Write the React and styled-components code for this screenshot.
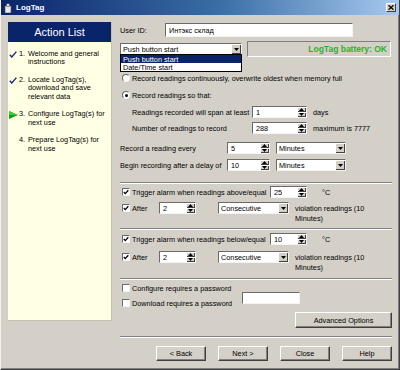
import React from "react";
import styled, { createGlobalStyle } from "styled-components";

const GlobalStyle = createGlobalStyle`
  html, body { margin:0; padding:0; background:#d4d0c8; }
  body {
    font-family: "Liberation Sans", Arial, sans-serif;
    font-size:7.3px;
    color:#000;
  }
  * { box-sizing:border-box; }
`;

const Window = styled.div`
  width:400px;
  height:370px;
  background:#d4d0c8;
  border-left:1px solid #f4f3ef;
  border-right:1px solid #404040;
  border-bottom:1px solid #404040;
  box-shadow:inset -1px -1px 0 #808080;
  display:flex;
  flex-direction:column;
  overflow:hidden;
`;

const TitleBar = styled.div`
  height:15px;
  flex:none;
  display:flex;
  align-items:center;
  padding:0 3px 0 3px;
  background:linear-gradient(90deg, #0a246a 0%, #3a6ea5 55%, #a6caf0 100%);
`;

const TitleText = styled.span`
  margin-left:4px;
  color:#fff;
  font-weight:bold;
  font-size:8px;
  flex:1;
`;

const CloseBox = styled.div`
  width:10px;
  height:9px;
  background:#d4d0c8;
  border:1px solid;
  border-color:#fff #404040 #404040 #fff;
  display:flex;
  align-items:center;
  justify-content:center;
`;

const Body = styled.div`
  display:flex;
  padding:7px 0 0 7px;
`;

const Sidebar = styled.div`
  width:104px;
  height:299px;
  flex:none;
  background:#ffffe4;
  border-right:1px solid #c4c0b0;
  border-bottom:1px solid #c4c0b0;
`;

const SideHeader = styled.div`
  height:20px;
  background:#0a246a;
  color:#fff;
  font-size:11px;
  display:flex;
  align-items:center;
  justify-content:center;
`;

const Steps = styled.div`
  padding-top:7.7px;
`;

const Step = styled.div`
  display:grid;
  grid-template-columns:10px 9px 1fr;
  line-height:8.67px;
  margin-bottom:8.67px;
  padding-left:1px;
`;

const StepMark = styled.div`
  height:8.67px;
  display:flex;
  align-items:center;
`;

const StepLine = styled.div`
  white-space:nowrap;
`;

const Main = styled.div`
  margin-left:8px;
  width:272px;
  display:flex;
  flex-direction:column;
`;

const Row = styled.div`
  display:flex;
  align-items:center;
  flex:none;
  height:${p => p.$h || 12}px;
  margin-top:${p => p.$mt || 0}px;
  padding-left:${p => p.$indent || 0}px;
  justify-content:${p => (p.$end ? "flex-end" : "flex-start")};
  gap:${p => p.$gap || 0}px;
`;

const Label = styled.span`
  flex:none;
  width:${p => (p.$w ? `${p.$w}px` : "auto")};
  margin-left:${p => p.$ml || 0}px;
  white-space:nowrap;
`;

const Note = styled.div`
  align-self:flex-start;
  margin-top:2px;
  margin-left:6px;
  line-height:10px;
  white-space:nowrap;
`;

const Field = styled.div`
  flex:none;
  display:flex;
  align-items:stretch;
  width:${p => p.$w}px;
  height:${p => p.$h || 12}px;
  margin-left:${p => p.$ml || 0}px;
  margin-top:${p => p.$mt || 0}px;
  background:#fff;
  border:1px solid;
  border-color:#6a6a6a #f4f4f4 #f4f4f4 #6a6a6a;
  position:relative;
`;

const FieldText = styled.span`
  flex:1;
  display:flex;
  align-items:center;
  padding-left:${p => p.$pl || 3}px;
  white-space:nowrap;
  overflow:hidden;
  color:${p => (p.$hi ? "#fff" : "#000")};
`;

const SpinButtons = styled.div`
  width:9px;
  display:flex;
  flex-direction:column;
`;

const Bevel = styled.div`
  flex:1;
  background:#d4d0c8;
  box-shadow:inset 1px 1px 0 #fff, inset -1px -1px 0 #404040;
  display:flex;
  align-items:center;
  justify-content:center;
`;

const DropButton = styled(Bevel)`
  flex:none;
  width:10px;
`;

const DropList = styled.div`
  position:absolute;
  top:100%;
  left:-1px;
  right:-1px;
  background:#fff;
  border:1px solid #000;
  z-index:2;
`;

const DropItem = styled.div`
  height:8px;
  display:flex;
  align-items:center;
  padding-left:2px;
  background:${p => (p.$active ? "#0a246a" : "transparent")};
  color:${p => (p.$active ? "#fff" : "#000")};
`;

const Battery = styled.div`
  flex:none;
  width:144px;
  height:16px;
  margin-left:5px;
  border:1px solid;
  border-color:#808080 #fff #fff #808080;
  display:flex;
  align-items:center;
  justify-content:flex-end;
  padding-right:3px;
  color:#1cb81c;
  font-weight:bold;
  font-size:8.5px;
`;

const Choice = styled.div`
  flex:none;
  display:flex;
  align-items:center;
  width:${p => (p.$w ? `${p.$w}px` : "auto")};
  height:12px;
`;

const Box = styled.div`
  width:8px;
  height:8px;
  margin-left:2px;
  margin-right:2px;
  flex:none;
  background:#fff;
  border:1px solid;
  border-color:#6a6a6a #f4f4f4 #f4f4f4 #6a6a6a;
  display:flex;
  align-items:center;
  justify-content:center;
  border-radius:${p => (p.$round ? "50%" : "0")};
`;

const Dot = styled.div`
  width:3px;
  height:3px;
  border-radius:50%;
  background:#000;
`;

const Separator = styled.div`
  flex:none;
  height:2px;
  margin-top:${p => p.$mt || 0}px;
  border-top:1px solid #808080;
  border-bottom:1px solid #fff;
`;

const PasswordBlock = styled.div`
  display:flex;
  align-items:flex-start;
  margin-top:2px;
`;

const ChoiceColumn = styled.div`
  width:122px;
  display:flex;
  flex-direction:column;
  gap:3px;
`;

const Button = styled.div`
  flex:none;
  width:${p => p.$w}px;
  height:${p => p.$h}px;
  background:#d4d0c8;
  border:1px solid;
  border-color:#fff #404040 #404040 #fff;
  box-shadow:inset -1px -1px 0 #808080;
  display:flex;
  align-items:center;
  justify-content:center;
  white-space:nowrap;
`;

const Arrow = ({ up }) => (
  <svg width="5" height="3" viewBox="0 0 5 3">
    <polygon points={up ? "2.5,0 5,3 0,3" : "0,0 5,0 2.5,3"} fill="#000" />
  </svg>
);

const Spin = ({ w, value, ml }) => (
  <Field $w={w} $ml={ml}>
    <FieldText>{value}</FieldText>
    <SpinButtons>
      <Bevel><Arrow up /></Bevel>
      <Bevel><Arrow /></Bevel>
    </SpinButtons>
  </Field>
);

const Combo = ({ w, value, ml, children }) => (
  <Field $w={w} $ml={ml}>
    <FieldText $pl={2}>{value}</FieldText>
    <DropButton>
      <svg width="5" height="3" viewBox="0 0 5 3">
        <polygon points="0,0 5,0 2.5,3" fill="#000" />
      </svg>
    </DropButton>
    {children}
  </Field>
);

const Tick = () => (
  <svg width="6" height="6" viewBox="0 0 6 6">
    <path d="M0.8 3 L2.3 4.6 L5.3 1.2" stroke="#000" strokeWidth="1.3" fill="none" />
  </svg>
);

const Check = ({ w, checked, children }) => (
  <Choice $w={w}>
    <Box>{checked && <Tick />}</Box>
    <Label>{children}</Label>
  </Choice>
);

const RadioChoice = ({ checked, children }) => (
  <Choice>
    <Box $round>{checked && <Dot />}</Box>
    <Label>{children}</Label>
  </Choice>
);

const StepIcon = ({ kind }) => {
  if (kind === "check")
    return (
      <svg width="8" height="7" viewBox="0 0 8 7">
        <path d="M0.8 3.8 L2.8 6 L7.4 0.6" stroke="#1c2a80" strokeWidth="1.4" fill="none" />
      </svg>
    );
  if (kind === "arrow")
    return (
      <svg width="9" height="8" viewBox="0 0 9 8">
        <polygon points="0,0 9,4 0,8" fill="#1a9a1a" />
        <polygon points="0,0 9,4 0,4" fill="#3ccc3c" />
      </svg>
    );
  return null;
};

const steps = [
  { kind: "check", num: "1.", lines: ["Welcome and general", "instructions"] },
  { kind: "check", num: "2.", lines: ["Locate LogTag(s),", "download and save", "relevant data"] },
  { kind: "arrow", num: "3.", lines: ["Configure LogTag(s) for", "next use"] },
  { kind: null, num: "4.", lines: ["Prepare LogTag(s) for", "next use"] },
];

const AlarmBlock = ({ dir, limit, first }) => (
  <>
    <Row $mt={first ? 2 : 3}>
      <Check w={150} checked>Trigger alarm when readings {dir}/equal</Check>
      <Spin w={37} value={limit} />
      <Label $ml={15}>°C</Label>
    </Row>
    <Row $mt={first ? 4 : 6}>
      <Check w={39} checked>After</Check>
      <Spin w={37} value="2" />
      <Combo w={71} ml={22} value="Consecutive" />
      <Note>
        violation readings (10
        <br />
        Minutes)
      </Note>
    </Row>
  </>
);

export default function App() {
  return (
    <>
      <GlobalStyle />
      <Window>
        <TitleBar>
          <svg width="8" height="10" viewBox="0 0 8 10">
            <rect x="1" y="3" width="6" height="7" fill="#e8e8e8" stroke="#505050" strokeWidth="0.6" />
            <circle cx="4" cy="2" r="1.6" fill="#e8e8e8" stroke="#505050" strokeWidth="0.6" />
          </svg>
          <TitleText>LogTag</TitleText>
          <CloseBox>
            <svg width="6" height="5" viewBox="0 0 6 5">
              <path d="M0.5 0.3 L5.5 4.7 M5.5 0.3 L0.5 4.7" stroke="#000" strokeWidth="1.3" />
            </svg>
          </CloseBox>
        </TitleBar>
        <Body>
          <Sidebar>
            <SideHeader>Action List</SideHeader>
            <Steps>
              {steps.map(s => (
                <Step key={s.num}>
                  <StepMark><StepIcon kind={s.kind} /></StepMark>
                  <div>{s.num}</div>
                  <div>
                    {s.lines.map(l => (
                      <StepLine key={l}>{l}</StepLine>
                    ))}
                  </div>
                </Step>
              ))}
            </Steps>
          </Sidebar>
          <Main>
            <Row $h={14} $mt={1}>
              <Label $w={45}>User ID:</Label>
              <Field $w={188} $h={14}>
                <FieldText>Интэкс склад</FieldText>
              </Field>
            </Row>
            <Row $h={16} $mt={4}>
              <Combo w={122} value="Push button start">
                <DropList>
                  <DropItem $active>Push button start</DropItem>
                  <DropItem>Date/Time start</DropItem>
                </DropList>
              </Combo>
              <Battery>LogTag battery: OK</Battery>
            </Row>
            <Row $mt={15}>
              <RadioChoice>Record readings continuously, overwrite oldest when memory full</RadioChoice>
            </Row>
            <Row $mt={5}>
              <RadioChoice checked>Record readings so that:</RadioChoice>
            </Row>
            <Row $mt={5} $indent={12}>
              <Label $w={120}>Readings recorded will span at least</Label>
              <Spin w={55} value="1" />
              <Label $ml={6}>days</Label>
            </Row>
            <Row $mt={4} $indent={12}>
              <Label $w={120}>Number of readings to record</Label>
              <Spin w={55} value="288" />
              <Label $ml={6}>maximum is 7777</Label>
            </Row>
            <Row $mt={8}>
              <Label $w={107}>Record a reading every</Label>
              <Spin w={43} value="5" />
              <Combo w={70} ml={6} value="Minutes" />
            </Row>
            <Row $mt={5}>
              <Label $w={107}>Begin recording after a delay of</Label>
              <Spin w={43} value="10" />
              <Combo w={70} ml={6} value="Minutes" />
            </Row>
            <Separator $mt={11} />
            <AlarmBlock dir="above" limit="25" first />
            <Separator $mt={14} />
            <AlarmBlock dir="below" limit="10" />
            <Separator $mt={15} />
            <PasswordBlock>
              <ChoiceColumn>
                <Check>Configure requires a password</Check>
                <Check>Download requires a password</Check>
              </ChoiceColumn>
              <Field $w={58} $mt={10} />
            </PasswordBlock>
            <Row $h={16} $mt={3} $end>
              <Button $w={97} $h={16}>Advanced Options</Button>
            </Row>
            <Separator $mt={8} />
            <Row $h={15} $mt={8} $end $gap={12}>
              <Button $w={50} $h={15}>&lt; Back</Button>
              <Button $w={50} $h={15}>Next &gt;</Button>
              <Button $w={50} $h={15}>Close</Button>
              <Button $w={50} $h={15}>Help</Button>
            </Row>
          </Main>
        </Body>
      </Window>
    </>
  );
}
